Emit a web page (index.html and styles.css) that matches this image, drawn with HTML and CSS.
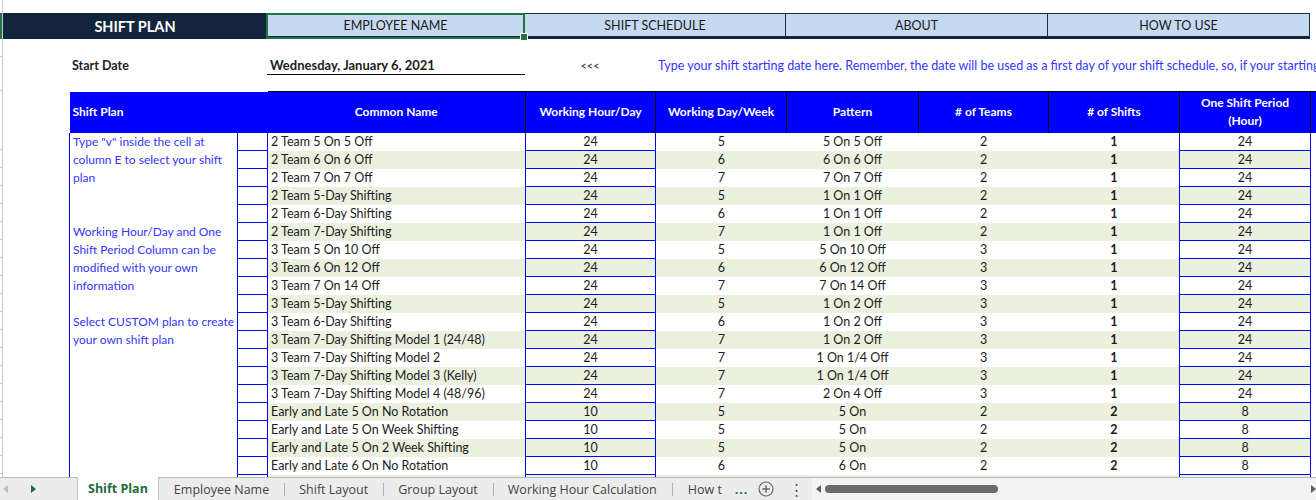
FILE: index.html
```html
<!DOCTYPE html>
<html lang="en">

<head>
    <meta charset="UTF-8">
    <meta name="viewport" content="width=device-width, initial-scale=1.0">
    <title>Shift Plan</title>
    <link rel="stylesheet" href="styles.css">
</head>

<body>
    <div class="sheet">
        <div class="gutter"></div>
        <div class="cells">
            <nav class="topbar">
                <div class="brand">SHIFT PLAN</div>
                <div class="tab tab-employee active">EMPLOYEE NAME</div>
                <div class="tab tab-schedule">SHIFT SCHEDULE</div>
                <div class="tab tab-about">ABOUT</div>
                <div class="tab tab-howto">HOW TO USE</div>
            </nav>

            <div class="start-row">
                <div class="start-label">Start Date</div>
                <div class="start-date">Wednesday, January 6, 2021</div>
                <div class="start-arrows">&lt;&lt;&lt;</div>
                <div class="start-hint">Type your shift starting date here. Remember, the date will be used as a first day of your shift schedule, so, if your starting date is not the first day of the month</div>
            </div>

            <table class="plan">
                <colgroup>
                    <col style="width:168px">
                    <col style="width:30px">
                    <col style="width:258px">
                    <col style="width:130px">
                    <col style="width:131px">
                    <col style="width:132px">
                    <col style="width:130px">
                    <col style="width:131px">
                    <col style="width:131px">
                    <col style="width:6px">
                </colgroup>
                <thead>
                    <tr>
                        <th colspan="2" class="h-plan">Shift Plan</th>
                        <th class="h-name">Common Name</th>
                        <th>Working Hour/Day</th>
                        <th>Working Day/Week</th>
                        <th>Pattern</th>
                        <th># of Teams</th>
                        <th># of Shifts</th>
                        <th>One Shift Period<br>(Hour)</th>
                        <th></th>
                    </tr>
                </thead>
                <tbody>
                    <tr>
                        <td rowspan="20" class="notes">Type "v" inside the cell at<br>column E to select your shift<br>plan<br><br><br>Working Hour/Day and One<br>Shift Period Column can be<br>modified with your own<br>information<br><br>Select CUSTOM plan to create<br>your own shift plan</td>
                        <td class="pick"></td><td>2 Team 5 On 5 Off</td><td class="hrs">24</td><td class="num">5</td><td class="num">5 On 5 Off</td><td class="num">2</td><td class="num bold">1</td><td class="period">24</td><td class="spare"></td>
                    </tr>
                    <tr><td class="pick"></td><td>2 Team 6 On 6 Off</td><td class="hrs">24</td><td class="num">6</td><td class="num">6 On 6 Off</td><td class="num">2</td><td class="num bold">1</td><td class="period">24</td><td class="spare"></td></tr>
                    <tr><td class="pick"></td><td>2 Team 7 On 7 Off</td><td class="hrs">24</td><td class="num">7</td><td class="num">7 On 7 Off</td><td class="num">2</td><td class="num bold">1</td><td class="period">24</td><td class="spare"></td></tr>
                    <tr><td class="pick"></td><td>2 Team 5-Day Shifting</td><td class="hrs">24</td><td class="num">5</td><td class="num">1 On 1 Off</td><td class="num">2</td><td class="num bold">1</td><td class="period">24</td><td class="spare"></td></tr>
                    <tr><td class="pick"></td><td>2 Team 6-Day Shifting</td><td class="hrs">24</td><td class="num">6</td><td class="num">1 On 1 Off</td><td class="num">2</td><td class="num bold">1</td><td class="period">24</td><td class="spare"></td></tr>
                    <tr><td class="pick"></td><td>2 Team 7-Day Shifting</td><td class="hrs">24</td><td class="num">7</td><td class="num">1 On 1 Off</td><td class="num">2</td><td class="num bold">1</td><td class="period">24</td><td class="spare"></td></tr>
                    <tr><td class="pick"></td><td>3 Team 5 On 10 Off</td><td class="hrs">24</td><td class="num">5</td><td class="num">5 On 10 Off</td><td class="num">3</td><td class="num bold">1</td><td class="period">24</td><td class="spare"></td></tr>
                    <tr><td class="pick"></td><td>3 Team 6 On 12 Off</td><td class="hrs">24</td><td class="num">6</td><td class="num">6 On 12 Off</td><td class="num">3</td><td class="num bold">1</td><td class="period">24</td><td class="spare"></td></tr>
                    <tr><td class="pick"></td><td>3 Team 7 On 14 Off</td><td class="hrs">24</td><td class="num">7</td><td class="num">7 On 14 Off</td><td class="num">3</td><td class="num bold">1</td><td class="period">24</td><td class="spare"></td></tr>
                    <tr><td class="pick"></td><td>3 Team 5-Day Shifting</td><td class="hrs">24</td><td class="num">5</td><td class="num">1 On 2 Off</td><td class="num">3</td><td class="num bold">1</td><td class="period">24</td><td class="spare"></td></tr>
                    <tr><td class="pick"></td><td>3 Team 6-Day Shifting</td><td class="hrs">24</td><td class="num">6</td><td class="num">1 On 2 Off</td><td class="num">3</td><td class="num bold">1</td><td class="period">24</td><td class="spare"></td></tr>
                    <tr><td class="pick"></td><td>3 Team 7-Day Shifting Model 1 (24/48)</td><td class="hrs">24</td><td class="num">7</td><td class="num">1 On 2 Off</td><td class="num">3</td><td class="num bold">1</td><td class="period">24</td><td class="spare"></td></tr>
                    <tr><td class="pick"></td><td>3 Team 7-Day Shifting Model 2</td><td class="hrs">24</td><td class="num">7</td><td class="num">1 On 1/4 Off</td><td class="num">3</td><td class="num bold">1</td><td class="period">24</td><td class="spare"></td></tr>
                    <tr><td class="pick"></td><td>3 Team 7-Day Shifting Model 3 (Kelly)</td><td class="hrs">24</td><td class="num">7</td><td class="num">1 On 1/4 Off</td><td class="num">3</td><td class="num bold">1</td><td class="period">24</td><td class="spare"></td></tr>
                    <tr><td class="pick"></td><td>3 Team 7-Day Shifting Model 4 (48/96)</td><td class="hrs">24</td><td class="num">7</td><td class="num">2 On 4 Off</td><td class="num">3</td><td class="num bold">1</td><td class="period">24</td><td class="spare"></td></tr>
                    <tr><td class="pick"></td><td>Early and Late 5 On No Rotation</td><td class="hrs">10</td><td class="num">5</td><td class="num">5 On</td><td class="num">2</td><td class="num bold">2</td><td class="period">8</td><td class="spare"></td></tr>
                    <tr><td class="pick"></td><td>Early and Late 5 On Week Shifting</td><td class="hrs">10</td><td class="num">5</td><td class="num">5 On</td><td class="num">2</td><td class="num bold">2</td><td class="period">8</td><td class="spare"></td></tr>
                    <tr><td class="pick"></td><td>Early and Late 5 On 2 Week Shifting</td><td class="hrs">10</td><td class="num">5</td><td class="num">5 On</td><td class="num">2</td><td class="num bold">2</td><td class="period">8</td><td class="spare"></td></tr>
                    <tr><td class="pick"></td><td>Early and Late 6 On No Rotation</td><td class="hrs">10</td><td class="num">6</td><td class="num">6 On</td><td class="num">2</td><td class="num bold">2</td><td class="period">8</td><td class="spare"></td></tr>
                    <tr><td class="pick"></td><td></td><td class="hrs"></td><td></td><td></td><td></td><td></td><td class="period"></td><td class="spare"></td></tr>
                </tbody>
            </table>
        </div>
    </div>

    <footer class="tabbar">
        <div class="tab-nav">
            <svg class="nav-prev" width="5" height="8" viewBox="0 0 5 8"><path d="M5 0 L0 4 L5 8 Z" fill="#bdbdbd"/></svg>
            <svg class="nav-next" width="5" height="8" viewBox="0 0 5 8"><path d="M0 0 L5 4 L0 8 Z" fill="#1e6b3a"/></svg>
        </div>
        <div class="sheet-tab current">Shift Plan</div>
        <div class="sheet-tab">Employee Name</div>
        <div class="sheet-tab">Shift Layout</div>
        <div class="sheet-tab">Group Layout</div>
        <div class="sheet-tab">Working Hour Calculation</div>
        <div class="sheet-tab cut"><span class="cut-text">How to Use</span><span class="more">...</span></div>
        <svg class="add-sheet" width="16" height="16" viewBox="0 0 16 16">
            <circle cx="8" cy="8" r="7" fill="none" stroke="#666" stroke-width="1.2"/>
            <path d="M8 4.2 V11.8 M4.2 8 H11.8" stroke="#666" stroke-width="1.4"/>
        </svg>
        <span class="vdots">&#8942;</span>
        <div class="hscroll">
            <svg width="5" height="8" viewBox="0 0 5 8"><path d="M5 0 L0 4 L5 8 Z" fill="#5f5f5f"/></svg>
            <span class="thumb"></span>
            <span class="track"></span>
            <svg width="5" height="8" viewBox="0 0 5 8"><path d="M0 0 L5 4 L0 8 Z" fill="#5f5f5f"/></svg>
        </div>
    </footer>
</body>

</html>
```

FILE: styles.css
```css
* {
    box-sizing: border-box;
}

body {
    margin: 0;
    font-family: Lato, "Liberation Sans", sans-serif;
    color: #1c1c1c;
    background-color: #fff;
    overflow: hidden;
}

.sheet {
    display: flex;
    height: 477px;
    overflow: hidden;
}

/* row header edge on the left */
.gutter {
    flex: none;
    width: 3px;
    border-right: 1px solid #c8c8c8;
    background:
        linear-gradient(#217346, #217346) 0 13px / 2px 26px no-repeat,
        linear-gradient(#c8c8c8, #c8c8c8) 0 56px / 2px 1px no-repeat,
        linear-gradient(#c8c8c8, #c8c8c8) 0 90px / 2px 1px no-repeat,
        repeating-linear-gradient(to bottom, transparent 0 17px, #c8c8c8 17px 18px) 0 132px / 2px 345px no-repeat;
}

.cells {
    flex: 1;
    min-width: 0;
}

/* top menu */
.topbar {
    display: flex;
    margin-top: 13px;
    height: 26px;
}

.brand {
    flex: none;
    width: 264px;
    background-color: #13253d;
    color: #fff;
    font-weight: 700;
    font-size: 14.5px;
    display: flex;
    align-items: center;
    justify-content: center;
}

.tab {
    flex: none;
    background-color: #c5d9f1;
    border-top: 1px solid #1b2b40;
    border-right: 1px solid #1b2b40;
    border-bottom: 3px solid #13253d;
    font-size: 12.5px;
    color: #1a1a1a;
    display: flex;
    align-items: center;
    justify-content: center;
}

.tab-employee {
    width: 258px;
    position: relative;
}

.tab-schedule {
    width: 261px;
}

.tab-about {
    width: 262px;
}

.tab-howto {
    width: 262px;
}

/* excel active cell */
.tab.active::after {
    content: '';
    position: absolute;
    top: -1px;
    left: -1px;
    right: -1px;
    bottom: -3px;
    border: 2px solid #217346;
}

.tab.active::before {
    content: '';
    position: absolute;
    right: -4px;
    bottom: -5px;
    width: 6px;
    height: 6px;
    background-color: #217346;
    border: 1px solid #fff;
    z-index: 1;
}

/* start date */
.start-row {
    display: flex;
    align-items: center;
    height: 52px;
    font-size: 12.5px;
}

.start-row > div {
    flex: none;
}

.start-label {
    margin-left: 69px;
    width: 195px;
    font-weight: 700;
}

.start-date {
    width: 258px;
    padding-left: 3px;
    line-height: 17px;
    font-size: 13px;
    font-weight: 700;
    border-bottom: 1px solid #000;
    margin-top: 1px;
}

.start-arrows {
    width: 130px;
    text-align: center;
    font-size: 11px;
}

.start-hint {
    padding-left: 3px;
    color: #3535ff;
    white-space: nowrap;
    font-size: 12.5px;
}

/* plan table */
.plan {
    margin-left: 66px;
    width: 1247px;
    table-layout: fixed;
    border-collapse: collapse;
    font-size: 12.5px;
}

.plan th {
    height: 41px;
    padding: 0 2px;
    background-color: #0000ff;
    color: #fff;
    font-weight: 700;
    font-size: 12px;
    line-height: 18px;
    text-align: center;
    border-top: 1px solid #000;
    border-left: 1px solid #000;
}

.plan th.h-plan {
    text-align: left;
    padding-left: 3px;
    border-top: none;
    border-left: none;
}

.plan th.h-name {
    border-left: none;
}

.plan tbody tr {
    height: 18px;
}

.plan td {
    padding: 1px 3px 0;
    line-height: 16px;
    white-space: nowrap;
    overflow: hidden;
}

.plan tbody tr:nth-child(even) td {
    background-color: #ebf0df;
}

.plan tbody tr td.pick,
.plan tbody tr td.spare {
    background-color: #fff;
}

.notes {
    vertical-align: top;
    color: #3535ff;
    border-left: 1px solid #0000ff;
    border-right: 1px solid #0000ff;
}

.plan td.notes {
    line-height: 18px;
    padding-top: 0;
    font-size: 12px;
}

.pick {
    border: 1px solid #0000ff;
}

.hrs,
.period {
    text-align: center;
    border: 1px solid #0000ff;
}

.num {
    text-align: center;
}

.bold {
    font-weight: 700;
}

/* sheet tabs */
.tabbar {
    display: flex;
    align-items: stretch;
    height: 23px;
    background-color: #ececec;
    border-top: 1px solid #b9b9b9;
    font-family: "Open Sans", "Noto Sans", sans-serif;
    font-size: 12.5px;
    color: #444;
}

.tab-nav {
    flex: none;
    width: 77px;
    display: flex;
    align-items: center;
    gap: 23px;
    padding-left: 3px;
}

.sheet-tab {
    flex: none;
    display: flex;
    align-items: center;
    padding: 0 15px;
    position: relative;
}

.sheet-tab + .sheet-tab::before {
    content: '';
    position: absolute;
    left: 0;
    top: 5px;
    bottom: 4px;
    border-left: 1px solid #b0b0b0;
}

.sheet-tab.current {
    background-color: #fff;
    color: #1e6b3a;
    font-weight: 700;
    margin-top: -1px;
    padding: 0 10px;
    border-left: 1px solid #c6c6c6;
    border-right: 1px solid #c6c6c6;
}

.sheet-tab.current + .sheet-tab::before {
    display: none;
}

.cut {
    padding-left: 16px;
    padding-right: 4px;
}

.cut-text {
    width: 34px;
    overflow: hidden;
    white-space: nowrap;
}

.more {
    margin-left: 13px;
    color: #1e6b3a;
    font-weight: 700;
    letter-spacing: 1px;
}

.add-sheet {
    flex: none;
    align-self: center;
    margin-left: 6px;
}

.vdots {
    flex: none;
    display: flex;
    align-items: center;
    margin-left: 15px;
    font-size: 15px;
    color: #555;
}

.hscroll {
    flex: 1;
    display: flex;
    align-items: center;
    gap: 4px;
    margin-left: 8px;
    background-color: #f3f3f3;
    padding-left: 4px;
}

.thumb {
    flex: none;
    width: 173px;
    height: 8px;
    border-radius: 4px;
    background-color: #6b6b6b;
}

.track {
    flex: 1;
}
```
